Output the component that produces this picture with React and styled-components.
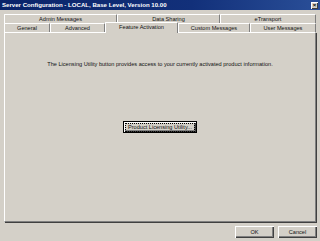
import React from "react";
import styled, { createGlobalStyle } from "styled-components";

const Global = createGlobalStyle`
  html, body { margin: 0; padding: 0; background: #d4d0c8; }
  body { font-family: "Liberation Sans", Arial, sans-serif; }
`;

const Window = styled.div`
  width: 320px;
  height: 241px;
  background: #d4d0c8;
  display: flex;
  flex-direction: column;
  overflow: hidden;
`;

const TitleBar = styled.div`
  height: 10px;
  background: linear-gradient(to right, #0a246a 0%, #12307a 60%, #2a4f98 100%);
  display: flex;
  align-items: center;
  justify-content: space-between;
  padding: 0 2px 0 2px;
`;

const TitleText = styled.span`
  color: #fff;
  font-weight: bold;
  font-size: 6.1px;
  line-height: 10px;
  white-space: nowrap;
`;

const CloseBtn = styled.div`
  width: 7px;
  height: 7px;
  background: #d4d0c8;
  box-shadow: inset 1px 1px 0 #fff, inset -1px -1px 0 #404040;
  display: flex;
  align-items: center;
  justify-content: center;
  font-size: 6px;
  font-weight: bold;
  line-height: 7px;
  color: #000;
`;

const Tabs = styled.div`
  margin: 4px 4px 0 4px;
  display: flex;
  flex-direction: column;
`;

const TabRow = styled.div`
  display: flex;
  height: 9px;
`;

const Tab = styled.div`
  width: ${(p) => p.$w}px;
  flex: none;
  box-sizing: border-box;
  height: ${(p) => (p.$active ? 11 : 9)}px;
  margin-top: ${(p) => (p.$active ? -1 : 0)}px;
  border-top: 1px solid #fff;
  border-left: 1px solid #fff;
  border-right: 1px solid #808080;
  border-radius: 1px 1px 0 0;
  background: #d4d0c8;
  color: #111;
  font-size: 5.6px;
  line-height: 8px;
  text-align: center;
  white-space: nowrap;
  position: relative;
  z-index: ${(p) => (p.$active ? 2 : 0)};
`;

const Panel = styled.div`
  margin: 0 4px 0 4px;
  height: 190px;
  box-sizing: border-box;
  border-top: 1px solid #fff;
  border-left: 1px solid #fff;
  border-right: 1px solid #808080;
  border-bottom: 1px solid #808080;
  box-shadow: 1px 1px 0 #404040;
  display: flex;
  flex-direction: column;
  align-items: center;
  padding-top: 28px;
`;

const Info = styled.div`
  font-size: 5.6px;
  line-height: 7px;
  color: #111;
  white-space: nowrap;
`;

const Button = styled.button`
  box-sizing: border-box;
  width: ${(p) => p.$w}px;
  height: ${(p) => p.$h}px;
  padding: 0;
  margin: 0;
  font-family: "Liberation Sans", Arial, sans-serif;
  font-size: 5.6px;
  color: #111;
  background: #d4d0c8;
  border: ${(p) => (p.$default ? "1px solid #000" : "none")};
  box-shadow: inset 1px 1px 0 #fff, inset -1px -1px 0 #404040,
    inset -2px -2px 0 #808080;
  display: flex;
  align-items: center;
  justify-content: center;
  line-height: 7px;
`;

const Focus = styled.span`
  outline: 1px dotted #000;
  outline-offset: 0;
  padding: 0 2px;
`;

const MainButton = styled(Button)`
  margin-top: 53px;
`;

const Footer = styled.div`
  display: flex;
  justify-content: flex-end;
  gap: 4px;
  padding: 4px 3px 0 0;
`;

export default function App() {
  const back = [
    { label: "Admin Messages", w: 113 },
    { label: "Data Sharing", w: 103 },
    { label: "eTransport", w: 96 },
  ];
  const front = [
    { label: "General", w: 46 },
    { label: "Advanced", w: 55 },
    { label: "Feature Activation", w: 73, active: true },
    { label: "Custom Messages", w: 72 },
    { label: "User Messages", w: 66 },
  ];
  return (
    <Window>
      <Global />
      <TitleBar>
        <TitleText>Server Configuration - LOCAL, Base Level, Version 10.00</TitleText>
        <CloseBtn>×</CloseBtn>
      </TitleBar>
      <Tabs>
        <TabRow>
          {back.map((t) => (
            <Tab key={t.label} $w={t.w}>
              {t.label}
            </Tab>
          ))}
        </TabRow>
        <TabRow>
          {front.map((t) => (
            <Tab key={t.label} $w={t.w} $active={t.active}>
              {t.label}
            </Tab>
          ))}
        </TabRow>
      </Tabs>
      <Panel>
        <Info>
          The Licensing Utility button provides access to your currently activated product information.
        </Info>
        <MainButton $w={74} $h={12} $default>
          <Focus>Product Licensing Utility...</Focus>
        </MainButton>
      </Panel>
      <Footer>
        <Button $w={39} $h={12}>OK</Button>
        <Button $w={39} $h={12}>Cancel</Button>
      </Footer>
    </Window>
  );
}
